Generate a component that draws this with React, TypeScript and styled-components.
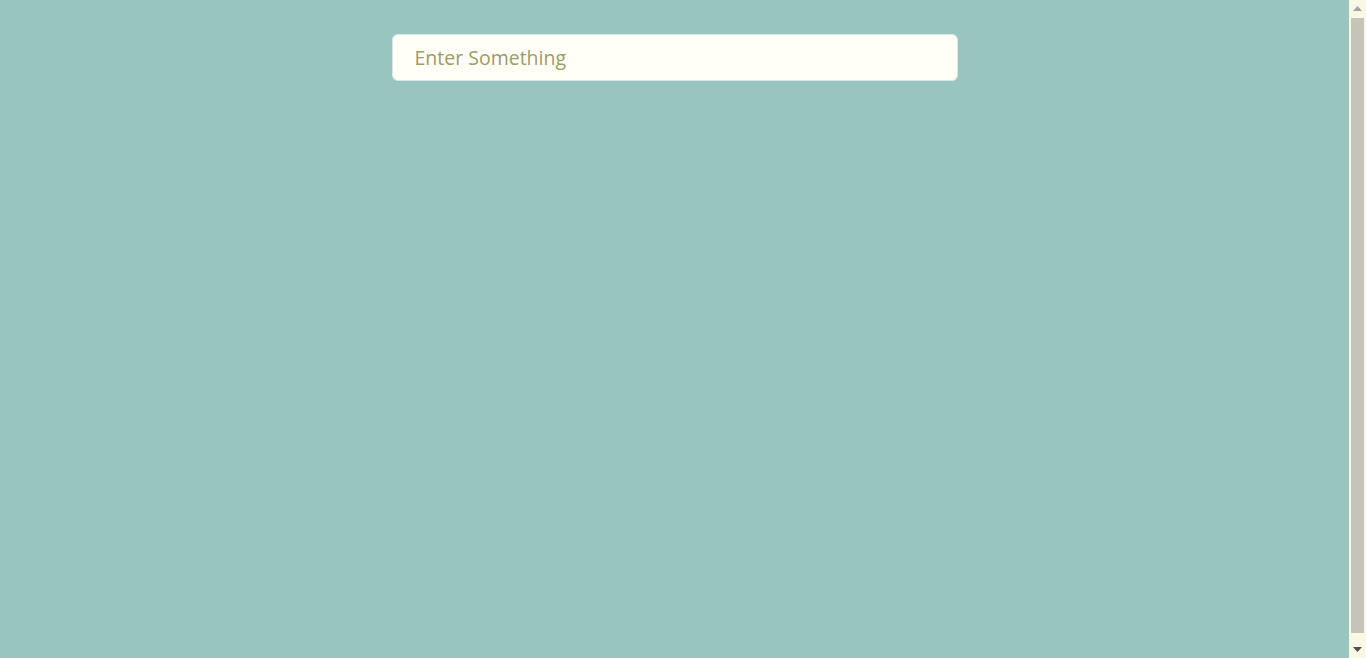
import styled, { createGlobalStyle } from 'styled-components';

const GlobalStyle = createGlobalStyle`
  html, body {
    margin: 0;
    padding: 0;
  }

  body {
    background-color: #98c5bd;
    font-family: 'Open Sans', 'Noto Sans', sans-serif;
  }
`;

const Page = styled.div`
  display: flex;
  height: 100vh;
`;

const Content = styled.main`
  flex: 1;
  display: flex;
  justify-content: center;
  align-items: flex-start;
  padding-top: 34px;
`;

const SearchInput = styled.input`
  box-sizing: border-box;
  width: 566px;
  height: 47px;
  padding: 0 20px 0 22px;
  border: 1px solid #d8e8e2;
  border-radius: 6px;
  background-color: #fffff8;
  font-family: 'Open Sans', 'Noto Sans', sans-serif;
  font-size: 19.5px;
  color: #555;
  outline: none;

  &::placeholder {
    color: #9c9c62;
  }
`;

// drawn stand-in for the browser's vertical scrollbar
const ScrollGutter = styled.div`
  width: 17px;
  display: flex;
  flex-direction: column;
  background-color: #f8f8e4;
`;

const ArrowButton = styled.div`
  height: 17px;
  display: flex;
  align-items: center;
  justify-content: center;
`;

const Track = styled.div`
  flex: 1;
  display: flex;
  padding: 1px 2px 8px;
`;

const Thumb = styled.div`
  flex: 1;
  background-color: #c4c4b8;
`;

const Arrow = ({ down, color }: { down?: boolean; color: string }) => (
  <svg width="9" height="5" viewBox="0 0 9 5">
    <polygon points={down ? '0,0 9,0 4.5,5' : '0,5 9,5 4.5,0'} fill={color} />
  </svg>
);

const App = () => {
  return (
    <>
      <GlobalStyle />
      <Page>
        <Content>
          <SearchInput type="text" placeholder="Enter Something" autoFocus />
        </Content>
        <ScrollGutter>
          <ArrowButton>
            <Arrow color="#a3a3a3" />
          </ArrowButton>
          <Track>
            <Thumb />
          </Track>
          <ArrowButton>
            <Arrow down color="#505050" />
          </ArrowButton>
        </ScrollGutter>
      </Page>
    </>
  );
};

export default App;
